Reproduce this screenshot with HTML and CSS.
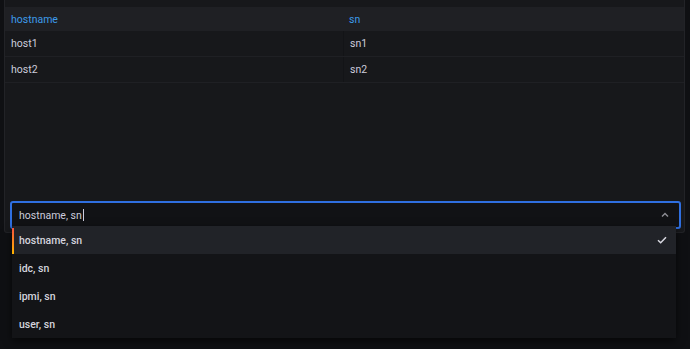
FILE: index.html
```html
<!DOCTYPE html>
<html lang="en">
<head>
  <meta charset="UTF-8">
  <meta name="viewport" content="width=device-width, initial-scale=1.0">
  <title>Table</title>
  <link rel="stylesheet" href="styles.css">
</head>
<body>

  <div class="panel">
    <div class="table">
      <div class="row head">
        <div class="cell">hostname</div>
        <div class="cell">sn</div>
      </div>
      <div class="row">
        <div class="cell">host1</div>
        <div class="cell">sn1</div>
      </div>
      <div class="row">
        <div class="cell">host2</div>
        <div class="cell">sn2</div>
      </div>
    </div>

    <div class="footer">
      <div class="select">
        <span class="value">hostname, sn<span class="caret"></span></span>
        <svg class="chevron" width="8" height="6" viewBox="0 0 8 6">
          <path d="M1 4.5 L4 1.5 L7 4.5" fill="none" stroke="#8e8e96" stroke-width="1.4"/>
        </svg>

        <div class="menu">
          <div class="option selected">
            <span>hostname, sn</span>
            <svg width="10" height="8" viewBox="0 0 10 8">
              <path d="M1 4.2 L3.7 6.8 L9 1.2" fill="none" stroke="#d8d8e0" stroke-width="1.5"/>
            </svg>
          </div>
          <div class="option"><span>idc, sn</span></div>
          <div class="option"><span>ipmi, sn</span></div>
          <div class="option"><span>user, sn</span></div>
        </div>
      </div>
    </div>
  </div>

</body>
</html>
```

FILE: styles.css
```css
* {
  box-sizing: border-box;
  margin: 0;
  padding: 0;
}

body {
  background: #0f1013;
  font-family: Roboto, "Liberation Sans", sans-serif;
  font-size: 10.5px;
  color: #ccccdc;
  height: 349px;
  overflow: hidden;
}

.panel {
  margin: 0 5px 0 4px;
  height: 233px;
  background: #17181b;
  border: 1px solid #222327;
  border-top: none;
  border-radius: 0 0 3px 3px;
  display: flex;
  flex-direction: column;
  padding-top: 7px;
}

.table {
  display: flex;
  flex-direction: column;
}

.row {
  display: grid;
  grid-template-columns: 338px 1fr;
  height: 26px;
  border-bottom: 1px solid #1f2024;
}

.row.head {
  height: 24px;
  background: #1f2024;
  color: #3d9be9;
  border-bottom: none;
}

.cell {
  display: flex;
  align-items: center;
  padding-left: 6px;
}

.cell + .cell {
  border-left: 1px solid #131417;
}

.row.head .cell + .cell {
  border-left: none;
  padding-left: 6px;
}

.footer {
  margin-top: auto;
  padding: 0 3px 3px 5px;
}

.select {
  position: relative;
  height: 28px;
  border: 2px solid #2f6fe0;
  border-radius: 3px;
  background: #111215;
  display: flex;
  align-items: center;
  justify-content: space-between;
  padding: 0 10px 0 7px;
}

.value {
  display: flex;
  align-items: center;
}

.caret {
  display: inline-block;
  width: 1px;
  height: 12px;
  background: #ccccdc;
  margin-left: 1px;
}

.menu {
  position: absolute;
  top: 23px;
  left: 0;
  width: 664px;
  background: #131417;
  box-shadow: 0 3px 8px rgba(0, 0, 0, 0.6);
  z-index: 10;
}

.option {
  height: 28px;
  display: flex;
  align-items: center;
  justify-content: space-between;
  padding: 0 9px 0 7px;
  font-weight: 500;
  color: #d4d4de;
  position: relative;
}

.option.selected {
  background: #212328;
}

.option.selected::before {
  content: "";
  position: absolute;
  left: 0;
  top: 2px;
  bottom: 0;
  width: 2px;
  background: linear-gradient(#f5543e, #ffb400);
}
```
